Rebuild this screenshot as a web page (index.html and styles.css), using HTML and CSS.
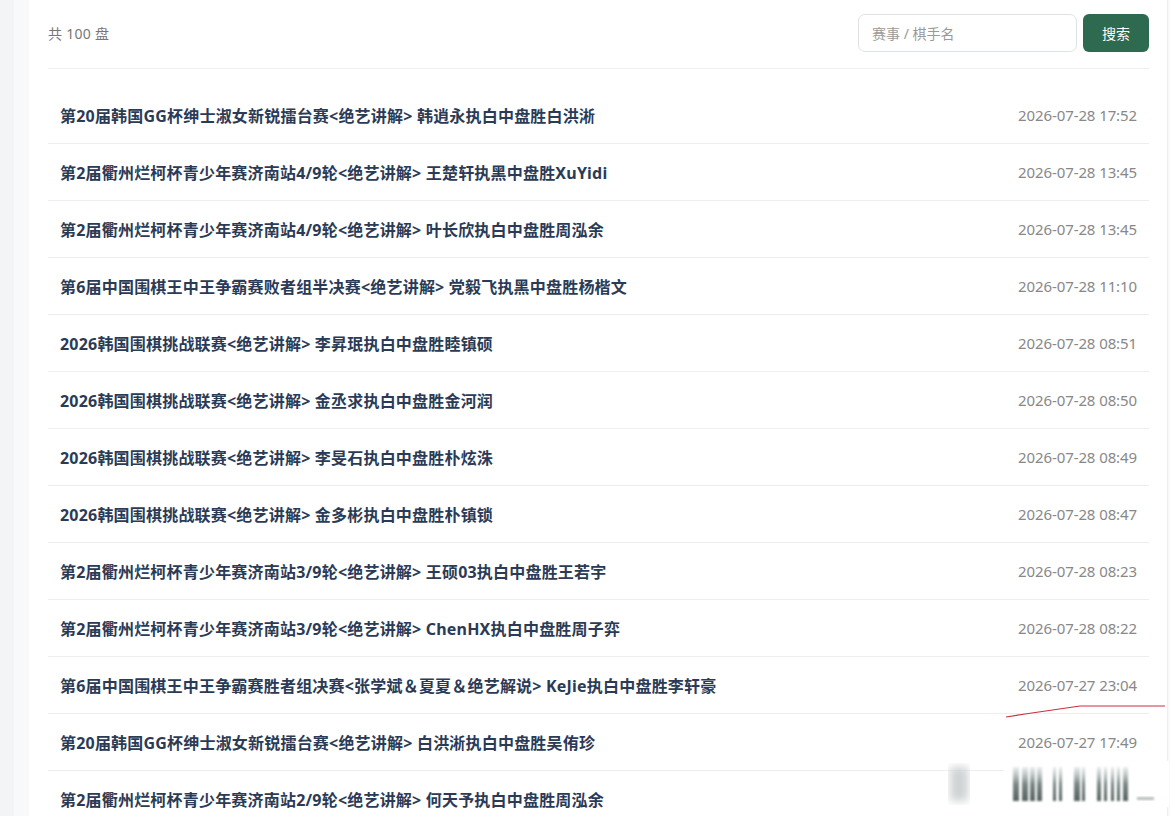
FILE: index.html
```html
<!DOCTYPE html>
<html lang="zh-CN">

<head>
    <meta charset="UTF-8">
    <meta name="viewport" content="width=device-width, initial-scale=1.0">
    <title>棋谱列表</title>
    <link rel="stylesheet" href="styles.css">
</head>

<body>
    <div class="layout">
        <div class="side"></div>
        <div class="main">
            <div class="card">
                <div class="toolbar">
                    <span class="total">共 100 盘</span>
                    <form class="search">
                        <input class="search-input" type="text" placeholder="赛事 / 棋手名">
                        <button class="search-btn" type="button">搜索</button>
                    </form>
                </div>

                <ul class="game-list">
                    <li class="game"><span class="game-title">第20届韩国GG杯绅士淑女新锐擂台赛&lt;绝艺讲解&gt; 韩逍永执白中盘胜白洪淅</span><span class="game-time">2026-07-28 17:52</span></li>
                    <li class="game"><span class="game-title">第2届衢州烂柯杯青少年赛济南站4/9轮&lt;绝艺讲解&gt; 王楚轩执黑中盘胜XuYidi</span><span class="game-time">2026-07-28 13:45</span></li>
                    <li class="game"><span class="game-title">第2届衢州烂柯杯青少年赛济南站4/9轮&lt;绝艺讲解&gt; 叶长欣执白中盘胜周泓余</span><span class="game-time">2026-07-28 13:45</span></li>
                    <li class="game"><span class="game-title">第6届中国围棋王中王争霸赛败者组半决赛&lt;绝艺讲解&gt; 党毅飞执黑中盘胜杨楷文</span><span class="game-time">2026-07-28 11:10</span></li>
                    <li class="game"><span class="game-title">2026韩国围棋挑战联赛&lt;绝艺讲解&gt; 李昇珉执白中盘胜睦镇硕</span><span class="game-time">2026-07-28 08:51</span></li>
                    <li class="game"><span class="game-title">2026韩国围棋挑战联赛&lt;绝艺讲解&gt; 金丞求执白中盘胜金河润</span><span class="game-time">2026-07-28 08:50</span></li>
                    <li class="game"><span class="game-title">2026韩国围棋挑战联赛&lt;绝艺讲解&gt; 李旻石执白中盘胜朴炫洙</span><span class="game-time">2026-07-28 08:49</span></li>
                    <li class="game"><span class="game-title">2026韩国围棋挑战联赛&lt;绝艺讲解&gt; 金多彬执白中盘胜朴镇锁</span><span class="game-time">2026-07-28 08:47</span></li>
                    <li class="game"><span class="game-title">第2届衢州烂柯杯青少年赛济南站3/9轮&lt;绝艺讲解&gt; 王硕03执白中盘胜王若宇</span><span class="game-time">2026-07-28 08:23</span></li>
                    <li class="game"><span class="game-title">第2届衢州烂柯杯青少年赛济南站3/9轮&lt;绝艺讲解&gt; ChenHX执白中盘胜周子弈</span><span class="game-time">2026-07-28 08:22</span></li>
                    <li class="game"><span class="game-title">第6届中国围棋王中王争霸赛胜者组决赛&lt;张学斌＆夏夏＆绝艺解说&gt; KeJie执白中盘胜李轩豪</span><span class="game-time">2026-07-27 23:04</span></li>
                    <li class="game"><span class="game-title">第20届韩国GG杯绅士淑女新锐擂台赛&lt;绝艺讲解&gt; 白洪淅执白中盘胜吴侑珍</span><span class="game-time">2026-07-27 17:49</span></li>
                    <li class="game"><span class="game-title">第2届衢州烂柯杯青少年赛济南站2/9轮&lt;绝艺讲解&gt; 何天予执白中盘胜周泓余</span><span class="game-time">2026-07-27 17:21</span></li>
                </ul>
            </div>
        </div>
    </div>

    <!-- 截图上的手绘红线 -->
    <svg class="mark" width="170" height="20" viewBox="0 0 170 20">
        <polyline points="1,13 20,10 75,2 160,2" fill="none" stroke="#c9303c" stroke-width="1.2" />
    </svg>

    <!-- 右下角模糊水印 -->
    <svg class="watermark" width="230" height="50" viewBox="0 0 230 50">
        <defs>
            <filter id="blur"><feGaussianBlur stdDeviation="1.2" /></filter>
            <filter id="blur2"><feGaussianBlur stdDeviation="4" /></filter>
            <linearGradient id="bar" x1="0" y1="0" x2="0" y2="1">
                <stop offset="0" stop-color="#9aa6a6" stop-opacity="0.2" />
                <stop offset="0.5" stop-color="#7b8887" />
                <stop offset="1" stop-color="#56625f" />
            </linearGradient>
        </defs>
        <rect x="60" y="2" width="165" height="46" fill="#fff" />
        <rect x="6" y="8" width="18" height="34" fill="#cfd3d4" filter="url(#blur2)" />
        <g fill="url(#bar)" filter="url(#blur)">
            <rect x="69" y="8" width="6" height="34" />
            <rect x="78" y="8" width="6" height="34" />
            <rect x="86" y="8" width="5" height="34" />
            <rect x="93" y="8" width="5" height="34" />
            <rect x="109" y="8" width="3" height="34" />
            <rect x="115" y="8" width="3" height="34" />
            <rect x="130" y="8" width="6" height="34" />
            <rect x="138" y="8" width="3" height="34" />
            <rect x="153" y="8" width="4" height="34" />
            <rect x="160" y="8" width="3" height="34" />
            <rect x="167" y="8" width="3" height="34" />
            <rect x="173" y="8" width="3" height="34" />
            <rect x="179" y="8" width="5" height="34" />
        </g>
        <rect x="193" y="38" width="17" height="3" fill="#b9bebe" filter="url(#blur)" />
    </svg>
</body>

</html>
```

FILE: styles.css
```css
* {
    margin: 0;
    padding: 0;
    box-sizing: border-box;
}

html {
    overflow: hidden;
}

body {
    background: #f3f4f5;
    font-family: "Noto Sans", "Noto Sans CJK SC", sans-serif;
    color: #2c3e50;
}

.layout {
    display: flex;
    min-height: 816px;
}

.side {
    width: 14px;
    flex: none;
}

.main {
    flex: 1;
    background: #f8f9fa;
    padding: 0 2px 0 15px;
}

.card {
    background: #fff;
    min-height: 100%;
    padding: 0 18px 0 19px;
    border-right: 1px solid #eceef0;
}

/* 顶部：总数 + 搜索 */
.toolbar {
    display: flex;
    align-items: center;
    justify-content: space-between;
    padding: 14px 0 16px;
    border-bottom: 1px solid #eceef0;
}

.total {
    font-size: 14px;
    letter-spacing: 0.3px;
    color: #777;
}

.search {
    display: flex;
    gap: 6px;
}

.search-input {
    width: 219px;
    height: 38px;
    border: 1px solid #dfe2e5;
    border-radius: 7px;
    padding: 0 13px;
    font-family: "Noto Sans", "Noto Sans CJK SC", sans-serif;
    font-size: 14px;
    color: #333;
    outline: none;
}

.search-input::placeholder {
    color: #9a9a9a;
}

.search-btn {
    width: 66px;
    height: 38px;
    border: none;
    border-radius: 6px;
    background: #2d6a4f;
    color: #fff;
    font-family: "Noto Sans CJK SC", sans-serif;
    font-size: 14px;
    cursor: pointer;
}

/* 棋谱列表 */
.game-list {
    list-style: none;
    margin-top: 18px;
}

.game {
    display: flex;
    align-items: center;
    justify-content: space-between;
    height: 57px;
    padding: 0 12px 0 12px;
    border-bottom: 1px solid #eceef0;
}

.game-title {
    font-size: 16px;
    font-weight: 700;
    letter-spacing: 0.2px;
    color: #2b3b56;
    white-space: nowrap;
}

.game-time {
    font-size: 15px;
    letter-spacing: -0.1px;
    color: #888;
    white-space: nowrap;
}

.mark {
    position: absolute;
    left: 1005px;
    top: 704px;
}

.watermark {
    position: absolute;
    left: 944px;
    top: 759px;
}
```
